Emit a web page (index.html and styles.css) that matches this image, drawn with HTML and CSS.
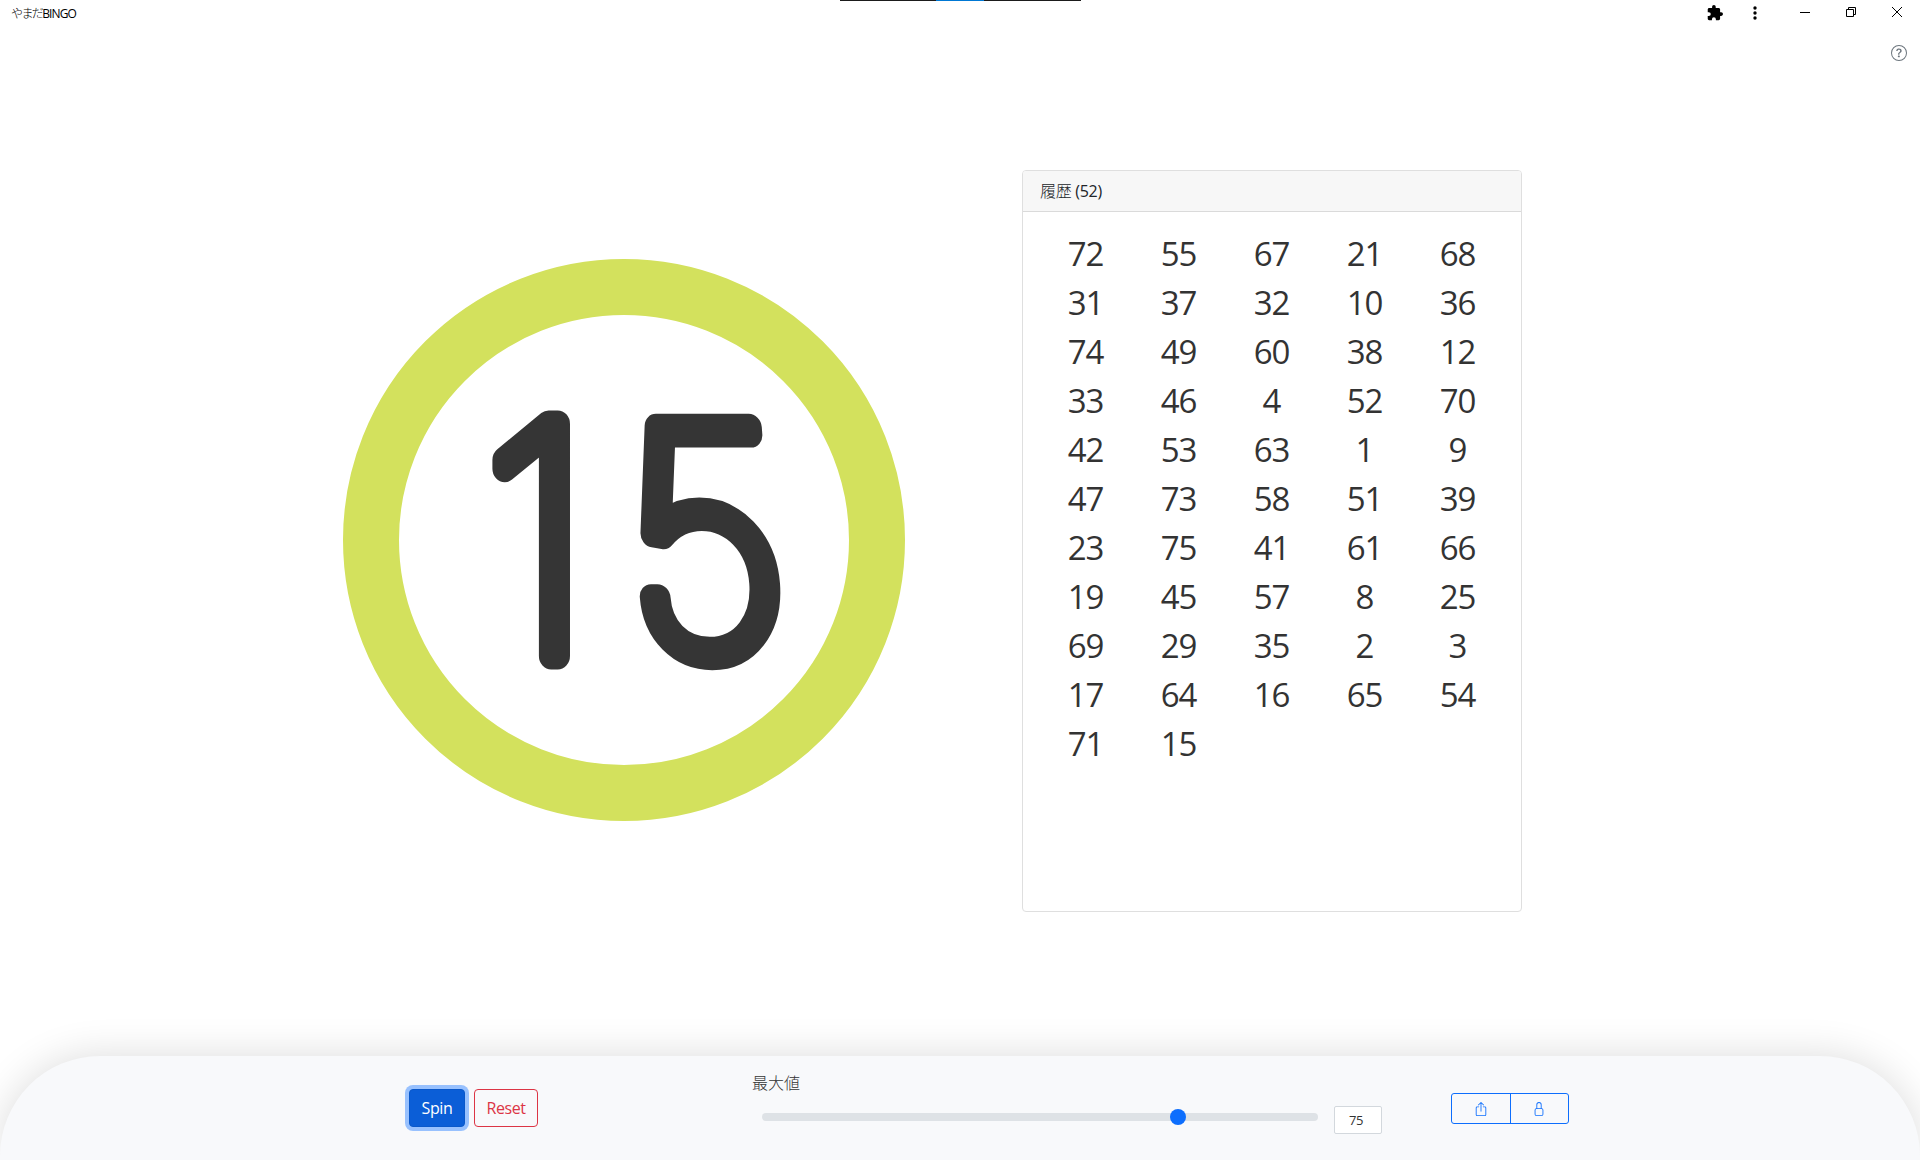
FILE: index.html
```html
<!DOCTYPE html>
<html lang="ja">
<head>
<meta charset="utf-8">
<title>やまだBINGO</title>
<link rel="stylesheet" href="styles.css">
</head>
<body>
<header class="titlebar">
  <span class="app-name"><span class="kana cjk">やまだ</span>BINGO</span>
  <div class="top-strip"><span></span></div>
  <div class="window-tools">
    <svg class="puzzle" width="16" height="16" viewBox="1 1 22 22"><path d="M20.5 11H19V7c0-1.1-.9-2-2-2h-4V3.500a2.500 2.500 0 0 0-5 0V5H4c-1.100 0-1.990.9-1.990 2v3.800H3.500a2.700 2.700 0 0 1 0 5.400H2V20c0 1.100.9 2 2 2h3.800v-1.500a2.700 2.700 0 0 1 5.400 0V22H17c1.100 0 2-.9 2-2v-4h1.500a2.500 2.500 0 0 0 0-5z"/></svg>
    <svg class="dots" width="4" height="14" viewBox="0 0 4 14"><circle cx="2" cy="2" r="1.700"/><circle cx="2" cy="7" r="1.700"/><circle cx="2" cy="12" r="1.700"/></svg>
    <svg class="win" width="10" height="10" viewBox="0 0 10 10"><path d="M0 5.500H10"/></svg>
    <svg class="win" width="10" height="10" viewBox="0 0 10 10"><path d="M.5 2.500H7.500V9.500H.5ZM2.500 2.500V.5H9.500V7.500H7.500"/></svg>
    <svg class="win" width="10" height="10" viewBox="0 0 10 10"><path d="M0 0L10 10M10 0L0 10"/></svg>
  </div>
</header>
<div class="help-row">
  <svg width="16" height="16" viewBox="0 0 16 16"><path d="M8 15A7 7 0 1 1 8 1a7 7 0 0 1 0 14zm0 1A8 8 0 1 0 8 0a8 8 0 0 0 0 16z"/><path d="M5.255 5.786a.237.237 0 0 0 .241.247h.825c.138 0 .248-.113.266-.25.09-.656.54-1.134 1.342-1.134.686 0 1.314.343 1.314 1.168 0 .635-.374.927-.965 1.371-.673.489-1.206 1.060-1.168 1.987l.003.217a.25.25 0 0 0 .25.246h.811a.25.25 0 0 0 .25-.25v-.105c0-.718.273-.927 1.010-1.486.609-.463 1.244-.977 1.244-2.056 0-1.511-1.276-2.241-2.673-2.241-1.267 0-2.655.59-2.750 2.286zm1.557 5.763c0 .533.425.927 1.010.927.609 0 1.028-.394 1.028-.927 0-.552-.42-.94-1.029-.94-.584 0-1.009.388-1.009.94z"/></svg>
</div>
<main class="board">
  <div class="ball">
    <svg class="ball-number" viewBox="0 0 450 450">
      <text class="digit" transform="translate(85 341) scale(0.91 1)">1</text>
      <text class="digit" transform="translate(233 339) skewX(4.2) scale(0.9 0.978)">5</text>
    </svg>
  </div>
  <section class="card">
    <h1 class="card-header"><span class="cjk">履歴</span> (52)</h1>
    <div class="numbers">
      <span>72</span><span>55</span><span>67</span><span>21</span><span>68</span>
      <span>31</span><span>37</span><span>32</span><span>10</span><span>36</span>
      <span>74</span><span>49</span><span>60</span><span>38</span><span>12</span>
      <span>33</span><span>46</span><span>4</span><span>52</span><span>70</span>
      <span>42</span><span>53</span><span>63</span><span>1</span><span>9</span>
      <span>47</span><span>73</span><span>58</span><span>51</span><span>39</span>
      <span>23</span><span>75</span><span>41</span><span>61</span><span>66</span>
      <span>19</span><span>45</span><span>57</span><span>8</span><span>25</span>
      <span>69</span><span>29</span><span>35</span><span>2</span><span>3</span>
      <span>17</span><span>64</span><span>16</span><span>65</span><span>54</span>
      <span>71</span><span>15</span>
    </div>
  </section>
</main>
<footer class="controls">
  <div class="actions">
    <button class="btn btn-spin">Spin</button>
    <button class="btn btn-reset">Reset</button>
  </div>
  <div class="maximum">
    <label class="max-label cjk">最大値</label>
    <div class="max-row">
      <div class="track"><div class="thumb"></div></div>
      <div class="max-value">75</div>
    </div>
  </div>
  <div class="group">
    <button class="group-btn" aria-label="Share"><svg width="14" height="14" viewBox="0 0 16 16"><path d="M3.500 6a.5.5 0 0 0-.5.5v8a.5.5 0 0 0 .5.5h9a.5.5 0 0 0 .5-.5v-8a.5.5 0 0 0-.5-.5h-2a.5.5 0 0 1 0-1h2A1.500 1.500 0 0 1 14 6.500v8a1.500 1.500 0 0 1-1.500 1.500h-9A1.500 1.500 0 0 1 2 14.500v-8A1.500 1.500 0 0 1 3.500 5h2a.5.5 0 0 1 0 1h-2z"/><path d="M7.646.146a.5.5 0 0 1 .708 0l3 3a.5.5 0 0 1-.708.708L8.500 1.707V10.500a.5.5 0 0 1-1 0V1.707L5.354 3.854a.5.5 0 1 1-.708-.708l3-3z"/></svg></button>
    <button class="group-btn" aria-label="Lock"><svg width="14" height="14" viewBox="0 0 16 16"><path d="M8 1a2 2 0 0 1 2 2v4H6V3a2 2 0 0 1 2-2zm3 6V3a3 3 0 0 0-6 0v4a2 2 0 0 0-2 2v5a2 2 0 0 0 2 2h6a2 2 0 0 0 2-2V9a2 2 0 0 0-2-2zM5 8h6a1 1 0 0 1 1 1v5a1 1 0 0 1-1 1H5a1 1 0 0 1-1-1V9a1 1 0 0 1 1-1z"/></svg></button>
  </div>
</footer>
</body>
</html>
```
FILE: styles.css
```css
* { box-sizing: border-box; }
body {
  margin: 0;
  height: 1160px;
  display: flex;
  flex-direction: column;
  overflow: hidden;
  background: #fff;
  color: #333;
  font-family: "Open Sans", "Noto Sans CJK JP", sans-serif;
}
svg { display: block; }
button { font-family: inherit; }
.cjk { font-weight: 300; }
.titlebar {
  position: relative;
  height: 26px;
  display: flex;
  justify-content: space-between;
  padding-left: 11px;
  color: #000;
}
.app-name { font-size: 12px; line-height: 27px; letter-spacing: -0.9px; font-weight: 400; }
.kana { letter-spacing: -1.6px; }
.top-strip {
  position: absolute;
  left: 840px;
  top: 0;
  width: 241px;
  height: 1px;
  background: #1b1b1b;
}
.top-strip span { display: block; width: 48px; height: 1px; margin-left: 96px; background: #0078d4; }
.window-tools { display: flex; padding-right: 18px; }
.puzzle { margin: 5px 30px 0 0; }
.dots { margin: 6px 43px 0 0; }
.win { margin: 7px 0 0 36px; overflow: visible; fill: none; stroke: #000; stroke-width: 1; }
.dots + .win { margin-left: 0; }
.help-row { height: 40px; display: flex; justify-content: flex-end; padding: 19px 13px 0 0; fill: #6c757d; }
.board {
  flex: 1;
  min-height: 0;
  display: flex;
  align-items: flex-start;
  padding: 104px 398px 0 343px;
  justify-content: space-between;
}
.ball {
  width: 562px;
  height: 562px;
  margin-top: 89px;
  border: 56px solid #d3e15d;
  border-radius: 50%;
}
.ball-number { width: 450px; height: 450px; overflow: visible; }
.digit {
  font-family: "Inter", sans-serif;
  font-size: 319px;
  font-weight: 100;
  fill: #353535;
  stroke: #353535;
  stroke-width: 27px;
  stroke-linejoin: round;
  stroke-linecap: round;
}
.card {
  width: 500px;
  height: 742px;
  border: 1px solid #dfdfdf;
  border-radius: 4px;
  overflow: hidden;
}
.card-header {
  margin: 0;
  height: 41px;
  padding-left: 17px;
  border-bottom: 1px solid #dadada;
  background: #f7f7f7;
  color: #212529;
  font-size: 16px;
  font-weight: 400;
  line-height: 41px;
  letter-spacing: -0.3px;
}
.numbers {
  display: grid;
  grid-template-columns: repeat(5, 93px);
  grid-auto-rows: 49px;
  padding: 17px 16px;
  font-size: 33px;
  font-weight: 370;
  line-height: 49px;
  letter-spacing: -1px;
  text-align: center;
}
.controls {
  height: 104px;
  display: flex;
  align-items: flex-start;
  padding: 0 351px 0 409px;
  background: #f8f9fb;
  border-radius: 100px 100px 0 0;
  box-shadow: 0 0 40px rgba(0, 0, 0, 0.14);
}
.actions { display: flex; gap: 9px; padding-top: 33px; width: 129px; }
.btn { height: 38px; padding: 0; border-radius: 4px; font-size: 16px; line-height: 36px; letter-spacing: -0.4px; }
.btn-spin { width: 56px; border: 1px solid #0a58ca; background: #0b5ed7; color: #fff; box-shadow: 0 0 0 4px #98c1fe; font-weight: 500; }
.btn-reset { width: 64px; border: 1px solid #dc3545; background: transparent; color: #dc3545; }
.maximum { width: 630px; margin-left: 214px; padding-top: 15px; }
.max-label { display: block; height: 24px; font-size: 16px; line-height: 24px; }
.max-row { display: flex; align-items: flex-start; padding: 11px 0 0 10px; }
.track { width: 556px; height: 8px; margin-top: 7px; border-radius: 4px; background: #dee2e6; }
.thumb { width: 16px; height: 16px; position: relative; top: -4px; left: 408px; border-radius: 50%; background: #0d6efd; }
.max-value {
  width: 48px;
  height: 28px;
  margin-left: 16px;
  border: 1px solid #d3d8dd;
  border-radius: 2px;
  background: #fff;
  padding-left: 14px;
  font-size: 13px;
  line-height: 27px;
  letter-spacing: -0.4px;
}
.group { width: 118px; height: 31px; margin: 37px 0 0 auto; display: flex; border: 1px solid #0d6efd; border-radius: 3px; fill: #0d6efd; }
.group-btn { flex: 1; display: flex; align-items: center; justify-content: center; padding: 0; border: 0; background: none; fill: inherit; }
.group-btn + .group-btn { border-left: 1px solid #0d6efd; }
```
